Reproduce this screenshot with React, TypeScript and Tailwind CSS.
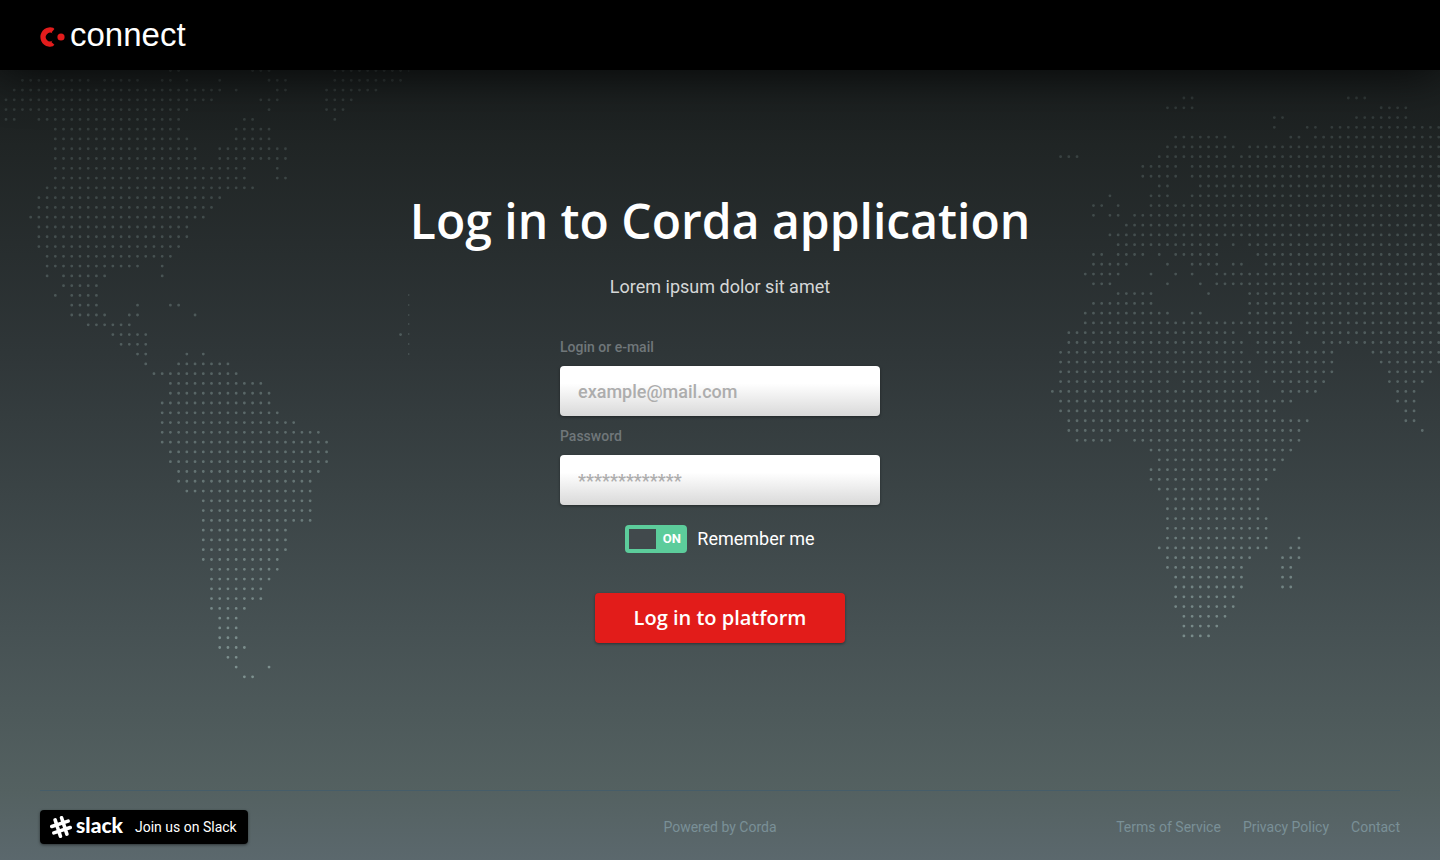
import { useState } from "react";

type Span = [number, number];
type Row = Span[];

// Each row lists the column spans that carry dots.
const AMERICAS: Row[] = [
  [[20, 21], [30, 32], [40, 48]],
  [[2, 10], [12, 16], [19, 20], [22, 22], [26, 26], [32, 34], [40, 48]],
  [[1, 26], [28, 28], [33, 34], [39, 45]],
  [[0, 25], [31, 33], [39, 42]],
  [[0, 22], [32, 32], [39, 41]],
  [[0, 1], [4, 21], [29, 30], [40, 40]],
  [[6, 21], [28, 32]],
  [[6, 22], [28, 32]],
  [[6, 23], [26, 34]],
  [[6, 23], [26, 34]],
  [[6, 29], [33, 33]],
  [[6, 29], [33, 34]],
  [[5, 30]],
  [[4, 26]],
  [[4, 25]],
  [[3, 24]],
  [[4, 22]],
  [[4, 22]],
  [[4, 21]],
  [[5, 20]],
  [[5, 16], [19, 19]],
  [[5, 5], [7, 12], [19, 19]],
  [[7, 11]],
  [[6, 6], [8, 11]],
  [[8, 11], [16, 16], [20, 21]],
  [[8, 12], [15, 16], [23, 23]],
  [[10, 15]],
  [[13, 17], [48, 48]],
  [[14, 17]],
  [[16, 17], [22, 22], [24, 24]],
  [[17, 17], [21, 27]],
  [[18, 28]],
  [[20, 31]],
  [[20, 32]],
  [[19, 32]],
  [[19, 33]],
  [[19, 35]],
  [[19, 38]],
  [[19, 39]],
  [[20, 39]],
  [[20, 39]],
  [[21, 38]],
  [[21, 37]],
  [[22, 37]],
  [[24, 37]],
  [[24, 37]],
  [[24, 37]],
  [[24, 34]],
  [[24, 34]],
  [[24, 34]],
  [[24, 33]],
  [[25, 33]],
  [[25, 32]],
  [[25, 31]],
  [[25, 31]],
  [[25, 29]],
  [[26, 28]],
  [[26, 28]],
  [[26, 28]],
  [[26, 29]],
  [[27, 28]],
  [[28, 28], [32, 32]],
  [[29, 30]],
];

const OLD_WORLD: Row[] = [
  [[15, 16], [35, 37]],
  [[13, 16], [39, 42]],
  [[26, 27], [36, 42]],
  [[26, 26], [30, 31], [33, 46]],
  [[14, 20], [28, 29], [31, 46]],
  [[13, 21], [23, 46]],
  [[0, 2], [12, 20], [22, 46]],
  [[10, 14], [16, 46]],
  [[10, 14], [16, 46]],
  [[12, 13], [17, 46]],
  [[6, 6], [11, 13], [16, 46]],
  [[4, 5], [7, 7], [11, 46]],
  [[4, 4], [6, 7], [9, 46]],
  [[8, 46]],
  [[6, 46]],
  [[7, 19], [21, 21], [23, 46]],
  [[4, 5], [7, 10], [12, 12], [14, 19], [24, 46]],
  [[4, 8], [13, 13], [16, 19], [21, 22], [25, 46]],
  [[3, 7], [11, 11], [14, 14], [16, 16], [19, 46]],
  [[4, 6], [13, 13], [17, 17], [19, 46]],
  [[7, 11], [18, 18], [23, 46]],
  [[4, 11], [23, 46]],
  [[3, 13], [16, 17], [23, 46]],
  [[3, 28], [30, 46]],
  [[1, 21], [23, 28], [30, 46]],
  [[1, 22], [24, 29], [32, 46]],
  [[0, 22], [24, 33], [38, 46]],
  [[0, 23], [25, 33], [39, 46]],
  [[0, 23], [25, 33], [40, 45]],
  [[0, 13], [15, 24], [26, 32], [40, 44]],
  [[-1, 24], [27, 31], [41, 43]],
  [[0, 28], [41, 43]],
  [[0, 26], [42, 43]],
  [[1, 30], [42, 43]],
  [[1, 29], [44, 44]],
  [[2, 6], [9, 29]],
  [[11, 28]],
  [[12, 27]],
  [[11, 26]],
  [[11, 25]],
  [[12, 24]],
  [[13, 24]],
  [[13, 24]],
  [[13, 25]],
  [[13, 25]],
  [[13, 25], [29, 29]],
  [[12, 25], [28, 29]],
  [[13, 23], [27, 29]],
  [[13, 22], [27, 28]],
  [[14, 22], [27, 28]],
  [[14, 22], [27, 28]],
  [[14, 21]],
  [[14, 21]],
  [[15, 20]],
  [[15, 19]],
  [[15, 18]],
];

function dots(rows: Row[], x0: number, y0: number) {
  const out: { x: number; y: number }[] = [];
  rows.forEach((row, r) =>
    row.forEach(([from, to]) => {
      for (let c = from; c <= to; c++) out.push({ x: x0 + c * 8.22, y: y0 + r * 9.78 });
    }),
  );
  return out;
}

function DotMap({ id, rows, x0, y0, side }: { id: string; rows: Row[]; x0: number; y0: number; side: string }) {
  return (
    <svg width="410" height="620" viewBox="0 0 410 620" className={side} aria-hidden="true">
      <defs>
        <linearGradient id={id} gradientUnits="userSpaceOnUse" x1="0" y1="0" x2="0" y2="620">
          <stop offset="0" stopColor="#8fa5a3" stopOpacity="0.16" />
          <stop offset="0.4" stopColor="#8fa5a3" stopOpacity="0.34" />
          <stop offset="1" stopColor="#a0b8b5" stopOpacity="0.62" />
        </linearGradient>
      </defs>
      <g fill={`url(#${id})`}>
        <path
          d={dots(rows, x0, y0)
            .map((d) => `M${(d.x - 1.4).toFixed(2)} ${d.y.toFixed(2)}a1.4 1.4 0 1 0 2.8 0a1.4 1.4 0 1 0 -2.8 0`)
            .join("")}
        />
        {side.includes("left") && (
          <path d="M408.4 0h.8v2h-.8zM408.4 224h.8v2h-.8zM408.4 234h.8v2h-.8zM408.4 244h.8v2h-.8zM408.4 253h.8v2h-.8zM408.4 263h.8v2h-.8zM408.4 273h.8v2h-.8zM408.4 283h.8v2h-.8z" />
        )}
      </g>
    </svg>
  );
}

function BrandMark() {
  return (
    <svg width="25" height="20" viewBox="0 0 25 20" className="mt-[3px]" aria-hidden="true">
      <path
        d="M14.4 1.9L13.2 .8A9.7 9.7 0 1 0 12.8 19.3L14.4 17.8L11.4 14.9L12.6 13.6A4.3 4.3 0 1 1 12.6 6.6L11.7 5.3Z"
        fill="#e21c1c"
      />
      <circle cx="21" cy="10" r="3.6" fill="#e21c1c" />
    </svg>
  );
}

function SlackMark() {
  return (
    <svg width="22" height="22" viewBox="0 0 22 22" aria-hidden="true">
      <g transform="rotate(-18 11 11)" stroke="#fff" strokeWidth="3.6" strokeLinecap="round">
        <path d="M7.6 2.4V19.6M14.4 2.4V19.6M2.4 7.6H19.6M2.4 14.4H19.6" />
      </g>
    </svg>
  );
}

function Field({ id, label, type, placeholder }: { id: string; label: string; type: string; placeholder: string }) {
  return (
    <div className="flex flex-col gap-2">
      <label htmlFor={id} className="text-sm leading-[21px] font-medium text-[#70777a]">
        {label}
      </label>
      <input
        id={id}
        type={type}
        placeholder={placeholder}
        className="h-[50px] w-full rounded bg-linear-to-b from-white from-35% to-[#d9d9d9] px-[18px] text-lg font-medium text-[#333] shadow-[0_1px_3px_rgba(0,0,0,0.4)] outline-none placeholder:text-[#adadad]"
      />
    </div>
  );
}

export default function App() {
  const [remember, setRemember] = useState(true);

  return (
    <div className="relative flex min-h-screen flex-col bg-[linear-gradient(#191d1d_8%,#202525_17%,#2f3638_41%,#465153_73%,#546161_92%,#5b686d_100%)] font-['Roboto',sans-serif] text-white">
      <div className="pointer-events-none absolute inset-0 overflow-hidden">
        <DotMap id="fade-west" rows={AMERICAS} x0={6} y0={0.5} side="absolute top-[70px] left-0" />
        <DotMap id="fade-east" rows={OLD_WORLD} x0={30.6} y0={28} side="absolute top-[70px] right-0" />
      </div>

      <header className="relative flex h-[70px] items-center bg-black px-10 shadow-[0_0_50px_rgba(0,0,0,0.8)]">
        <a href="#" className="flex items-center gap-[5px]">
          <BrandMark />
          <span className="font-['Liberation_Sans',sans-serif] text-[33px] leading-9">connect</span>
        </a>
      </header>

      <main className="relative flex flex-1 flex-col items-center px-5 pt-[121px] pb-20">
        <h1 className="text-center font-['Open_Sans',sans-serif] text-[48px] leading-[60px] font-semibold">
          Log in to Corda application
        </h1>
        <p className="mt-6 text-lg leading-6 text-[#d5d7d7]">Lorem ipsum dolor sit amet</p>

        <form className="mt-[38px] flex w-full max-w-80 flex-col items-center" onSubmit={(e) => e.preventDefault()}>
          <div className="flex w-full flex-col gap-[10px]">
            <Field id="login" label="Login or e-mail" type="text" placeholder="example@mail.com" />
            <Field id="password" label="Password" type="password" placeholder="*************" />
          </div>

          <label className="mt-5 flex cursor-pointer items-center gap-[10px] text-lg leading-7">
            <input
              type="checkbox"
              className="peer sr-only"
              checked={remember}
              onChange={(e) => setRemember(e.target.checked)}
            />
            <span
              aria-hidden="true"
              className="flex h-7 w-[62px] flex-row-reverse items-center rounded bg-[#8a9294] p-1 text-[13px] font-bold peer-checked:flex-row peer-checked:bg-[#5ccc9b]"
            >
              <span className="h-5 w-[27px] bg-[#41494c]" />
              <span className="flex-1 pl-1 text-center">{remember ? "ON" : "OFF"}</span>
            </span>
            Remember me
          </label>

          <button
            type="submit"
            className="mt-10 h-[50px] w-[250px] cursor-pointer rounded bg-[#e21c1a] font-['Open_Sans',sans-serif] text-xl font-semibold shadow-[0_1px_3px_rgba(0,0,0,0.4)]"
          >
            Log in to platform
          </button>
        </form>
      </main>

      <footer className="relative mx-10 grid grid-cols-[1fr_auto_1fr] items-center border-t border-solid border-t-[#465d69] pt-[19px] pb-4 text-sm text-[#7a9097]">
        <a
          href="#"
          className="flex h-[34px] w-52 items-center rounded bg-black pl-[10px] text-white shadow-[0_1px_3px_rgba(0,0,0,0.5)]"
        >
          <SlackMark />
          <span className="ml-1 pb-1 font-['Lato',sans-serif] text-[21px] leading-6 font-black">slack</span>
          <span className="ml-3">Join us on Slack</span>
        </a>
        <p>Powered by Corda</p>
        <nav className="flex justify-end gap-[22px]">
          <a href="#">Terms of Service</a>
          <a href="#">Privacy Policy</a>
          <a href="#">Contact</a>
        </nav>
      </footer>
    </div>
  );
}
